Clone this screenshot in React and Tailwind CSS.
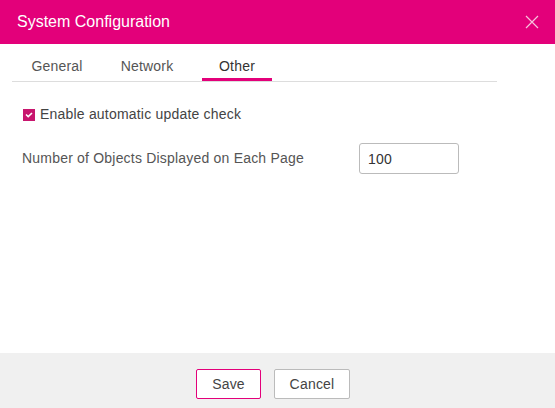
import React, { useState } from 'react';

export default function App() {
  const [tab, setTab] = useState('Other');
  const [autoCheck, setAutoCheck] = useState(true);
  const tabs = [
    { name: 'General', cls: 'w-[90px]' },
    { name: 'Network', cls: 'w-[90px]' },
    { name: 'Other', cls: 'w-[70px] ml-[10px]' },
  ];

  return (
    <div className="w-[555px] h-[408px] flex flex-col bg-white text-[14px] tracking-[0.2px] text-[#333]" style={{ fontFamily: '"Liberation Sans", Arial, sans-serif' }}>
      <div className="h-[44px] shrink-0 bg-[#e3007a] flex items-center justify-between pl-[17px] pr-[16px]">
        <h3 className="text-white text-[16px] tracking-normal leading-none">System Configuration</h3>
        <button className="w-[14px] h-[14px] flex items-center justify-center">
          <svg width="14" height="14" viewBox="0 0 14 14" fill="none" stroke="#f6c3dd" strokeWidth="1.2">
            <path d="M1 1 L13 13 M13 1 L1 13" />
          </svg>
        </button>
      </div>

      <div className="flex-1 flex flex-col">
        <div className="mx-[12px] w-[485px] h-[38px] flex border-b border-[#ddd]">
          {tabs.map((t) => (
            <button
              key={t.name}
              onClick={() => setTab(t.name)}
              className={`h-full flex items-start justify-center pt-[12px] leading-[20px] border-b-[3px] -mb-[2px] ${t.cls} ${
                tab === t.name ? 'border-[#e3007a] text-[#333]' : 'border-transparent text-[#555]'
              }`}
            >
              {t.name}
            </button>
          ))}
        </div>

        <div className="pl-[22px] pt-[22px]">
          <label className="flex items-center gap-[5px] cursor-pointer">
            <span
              onClick={() => setAutoCheck(!autoCheck)}
              className={`w-[12px] h-[12px] flex items-center justify-center ml-[1px] ${autoCheck ? 'bg-[#c8166e]' : 'border border-[#999] bg-white'}`}
            >
              {autoCheck && (
                <svg width="8" height="6" viewBox="0 0 8 6" fill="none" stroke="white" strokeWidth="1.6">
                  <path d="M1 2.5 L3.2 4.6 L7 1" />
                </svg>
              )}
            </span>
            <span className="text-[#444]">Enable automatic update check</span>
          </label>

          <div className="flex items-center mt-[18px]">
            <span className="w-[337px] text-[#555]">Number of Objects Displayed on Each Page</span>
            <input
              defaultValue="100"
              className="w-[100px] h-[31px] border border-[#bbb] rounded-[3px] px-[8px] text-[14px] text-[#333] outline-none"
            />
          </div>
        </div>
      </div>

      <div className="h-[55px] shrink-0 bg-[#f0f0f0] flex items-start justify-center gap-[13px] pt-[16px] pr-[9px]">
        <button className="w-[65px] h-[30px] border border-[#e3007a] rounded-[2px] bg-white text-[#444]">Save</button>
        <button className="w-[76px] h-[30px] border border-[#bbb] rounded-[2px] bg-white text-[#444]">Cancel</button>
      </div>
    </div>
  );
}
